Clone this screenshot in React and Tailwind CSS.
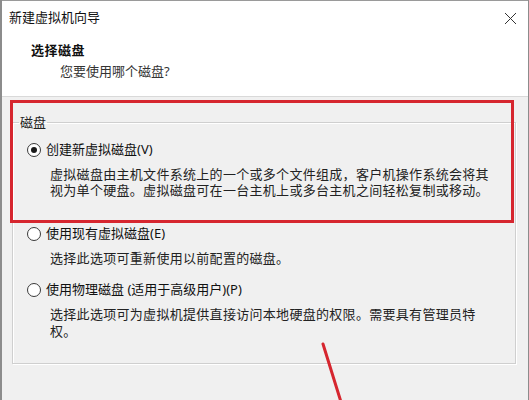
const font = { fontFamily: '"Noto Sans", "Noto Sans CJK SC", sans-serif' };

function Radio({ checked }) {
  return (
    <span className="flex h-[14px] w-[14px] shrink-0 items-center justify-center rounded-full border border-[#3a3a3a] bg-white">
      {checked && <span className="h-[6px] w-[6px] rounded-full bg-[#1a1a1a]" />}
    </span>
  );
}

function Option({ checked, label, children, className = "", descClass = "mt-[7px] leading-[16px]" }) {
  return (
    <div className={className}>
      <label className="flex h-[18px] items-center gap-[5px] pl-[14px] text-[13px] text-[#111]">
        <Radio checked={checked} />
        <span>{label}</span>
      </label>
      <p className={`pl-[37px] pr-4 text-[13px] tracking-[0.3px] text-[#222] ${descClass}`}>{children}</p>
    </div>
  );
}

export default function App() {
  return (
    <div className="relative h-[400px] w-[529px] overflow-hidden bg-[#f0f0f0]" style={font}>
      <div className="flex h-full flex-col border-l-2 border-r border-l-[#8c8c8c] border-r-[#8c8c8c]">
        <header className="h-[97px] shrink-0 border-t border-b border-t-[#9a9a9a] border-b-[#d9d9d9] bg-white">
          <div className="flex h-[34px] items-center justify-between pl-[7px] pr-[11px]">
            <span className="text-[13px] text-[#111]">新建虚拟机向导</span>
            <svg width="13" height="13" viewBox="0 0 13 13" className="text-[#333]">
              <path d="M1 1L12 12M12 1L1 12" stroke="currentColor" strokeWidth="1" />
            </svg>
          </div>
          <div className="mt-[7px] pl-[29px]">
            <h1 className="text-[13px] font-bold leading-[16px] tracking-[0.5px] text-[#111]">选择磁盘</h1>
            <p className="mt-[5px] pl-[29px] text-[13px] leading-[16px] text-[#333]">您要使用哪个磁盘?</p>
          </div>
        </header>

        <div className="flex-1 pl-[10px] pt-[17px]">
          <fieldset className="w-[504px] border border-[#cfcfcf] p-0 pb-[23px] shadow-[inset_1px_1px_0_#ffffff,1px_1px_0_#ffffff]">
            <legend className="ml-[6px] px-px text-[13px] leading-[16px] text-[#222]">磁盘</legend>
            <Option checked label="创建新虚拟磁盘(V)" className="mt-[11px]">
              虚拟磁盘由主机文件系统上的一个或多个文件组成，客户机操作系统会将其视为单个硬盘。虚拟磁盘可在一台主机上或多台主机之间轻松复制或移动。
            </Option>
            <Option label="使用现有虚拟磁盘(E)" className="mt-[27px]">
              选择此选项可重新使用以前配置的磁盘。
            </Option>
            <Option label="使用物理磁盘 (适用于高级用户)(P)" className="mt-[15px]" descClass="mt-[7px] leading-[17px]">
              选择此选项可为虚拟机提供直接访问本地硬盘的权限。需要具有管理员特权。
            </Option>
          </fieldset>
        </div>
      </div>

      {/* annotation */}
      <div className="pointer-events-none absolute left-[10px] top-[100px] h-[123px] w-[504px] border-[3px] border-[#d6262f]" />
      <svg className="pointer-events-none absolute left-0 top-0" width="529" height="400">
        <line x1="323" y1="344" x2="341" y2="402" stroke="#d6262f" strokeWidth="3" strokeLinecap="round" />
      </svg>
    </div>
  );
}
